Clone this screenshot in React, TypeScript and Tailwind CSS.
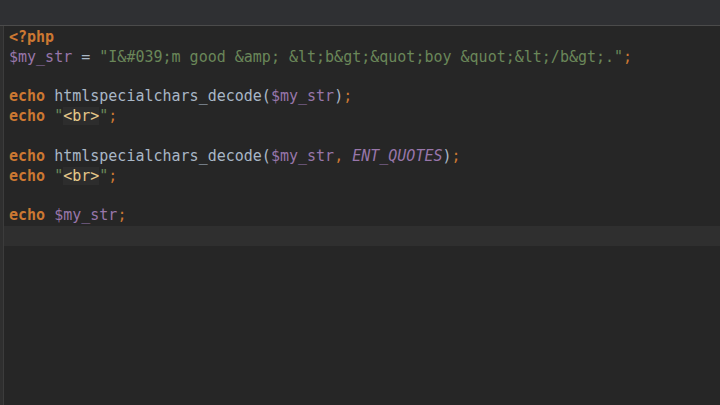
const K = ({ children }: { children: React.ReactNode }) => (
  <span className="text-[#cc7832] font-bold">{children}</span>
);
const V = ({ children }: { children: React.ReactNode }) => (
  <span className="text-[#9876aa]">{children}</span>
);
const S = ({ children }: { children: React.ReactNode }) => (
  <span className="text-[#6a8759]">{children}</span>
);
const P = ({ children }: { children: React.ReactNode }) => (
  <span className="text-[#cc7832]">{children}</span>
);

function Br() {
  return (
    <>
      <S>"</S>
      <span className="bg-[#2d2d2d] text-[#e6c88a]">&lt;br&gt;</span>
      <S>"</S>
      <P>;</P>
    </>
  );
}

export default function App() {
  const lines: React.ReactNode[] = [
    <K>&lt;?php</K>,
    <>
      <V>$my_str</V> = <S>"I&amp;#039;m good &amp;amp; &amp;lt;b&amp;gt;&amp;quot;boy &amp;quot;&amp;lt;/b&amp;gt;."</S>
      <P>;</P>
    </>,
    null,
    <>
      <K>echo</K> htmlspecialchars_decode(<V>$my_str</V>)<P>;</P>
    </>,
    <>
      <K>echo</K> <Br />
    </>,
    null,
    <>
      <K>echo</K> htmlspecialchars_decode(<V>$my_str</V>
      <P>,</P> <span className="text-[#9876aa] italic">ENT_QUOTES</span>)<P>;</P>
    </>,
    <>
      <K>echo</K> <Br />
    </>,
    null,
    <>
      <K>echo</K> <V>$my_str</V>
      <P>;</P>
    </>,
  ];

  return (
    <div className="w-[720px] h-[405px] bg-[#262626] flex flex-col overflow-hidden">
      <div className="h-[26px] bg-[#2f3033] border-b border-[#4b4b4b] shrink-0" />
      <div className="flex flex-1">
        <div className="w-[4px] bg-[#2f2f2f] border-r border-[#3c3c3c]" />
        <div
          className="flex-1 pt-[2px] text-[15px] leading-[19.8px] text-[#a9b7c6] whitespace-pre"
          style={{ fontFamily: '"DejaVu Sans Mono", monospace' }}
        >
          {lines.map((l, i) => (
            <div key={i} className="h-[19.8px] pl-[5px]">
              {l ?? " "}
            </div>
          ))}
          <div className="h-[19.8px] bg-[#2f2f2f]" />
        </div>
      </div>
    </div>
  );
}
